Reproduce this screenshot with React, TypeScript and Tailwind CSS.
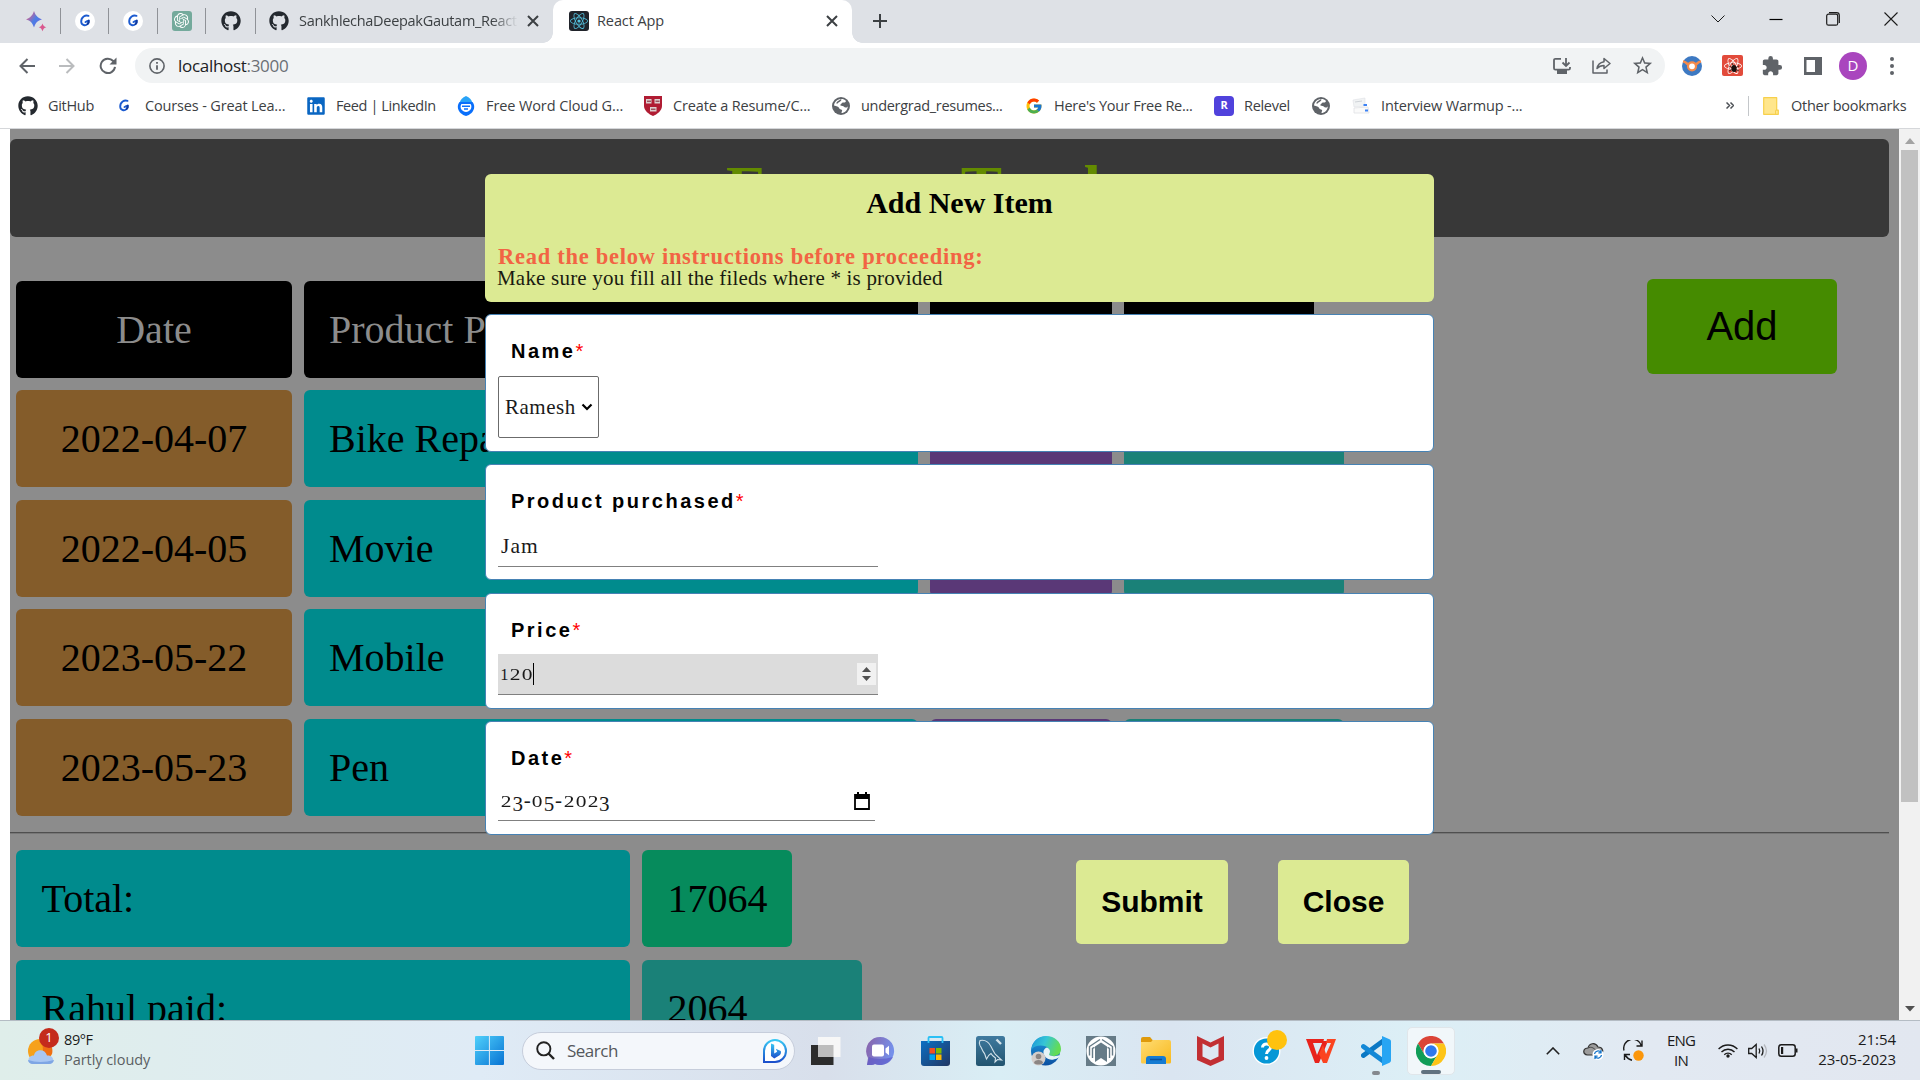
import React from "react";
import { FaGithub, FaLinkedin, FaReact } from "react-icons/fa";
import { FcGoogle } from "react-icons/fc";
import { SiOpenai } from "react-icons/si";
import { MdExtension, MdStarBorder } from "react-icons/md";

/* ---------- small brand and system icons ---------- */

const GreatLearning = ({ plain }: { plain?: boolean }) => (
  <svg viewBox="0 0 20 20" className="size-5">
    {!plain && <circle cx="10" cy="10" r="10" fill="#fff" />}
    <path d="M13.500 4.800C10.500 3.600 6 5.800 6.200 10.800c.2 3.600 4.200 4.200 6.300 2.300 1.200-1.100 1.300-2.600 1.200-3.300-1.300.300-2.200.700-3.200 1.200" fill="none" stroke="#1c5bd0" strokeWidth="1.900" strokeLinecap="round" />
    <path d="M12.500 13.100c1.200-1.100 1.300-2.600 1.200-3.300" fill="none" stroke="#123a9c" strokeWidth="1.900" strokeLinecap="round" />
  </svg>
);

const Sparkle = () => (
  <svg viewBox="0 0 22 22" className="size-[22px]">
    <defs>
      <linearGradient id="spark" x1="0" x2="1" y1="0.200" y2="1">
        <stop offset="0" stopColor="#f4587a" />
        <stop offset="0.500" stopColor="#4a7fe6" />
        <stop offset="1" stopColor="#7b5bd8" />
      </linearGradient>
    </defs>
    <path d="M9 1c1.800 5 3.500 6.500 8 8.300-4.500 1.700-6.200 3.200-8 8.200-1.800-5-3.500-6.500-8-8.200C5.500 7.500 7.200 6 9 1z" fill="url(#spark)" />
    <path d="M17.500 13.500c.8 2.300 1.700 3.100 3.800 3.800-2.100.7-3 1.600-3.800 3.900-.8-2.300-1.700-3.200-3.800-3.900 2.100-.7 3-1.500 3.800-3.800z" fill="#d9588e" />
  </svg>
);

const CloseX = () => (
  <svg viewBox="0 0 12 12" className="size-3" stroke="#3c4043" strokeWidth="2">
    <path d="M1 1l10 10M11 1L1 11" />
  </svg>
);

const Globe = () => (
  <svg viewBox="0 0 18 18" className="size-[18px]">
    <circle cx="9" cy="9" r="9" fill="#5f6368" />
    <path d="M9.500 2c2 0 3 .5 4.500 2-.5 1.500-1.500 1.700-3 1.500-1.500 0-1.200 1.500-2.500 2-1 .5.5 1.500 2 1.500s1.500 1.500 3 1.500 2-.5 2.500-1.500C15.500 13.500 12.500 16 9.500 16c0-1.500 1-2 .5-3-1-1-2.500-.5-3-2C6.500 9.500 4.500 9 2 8.500 2.500 4.500 5.500 2 9.500 2z" fill="#fff" />
    <path d="M9 2.500C8 5 5 4 5 6.500" fill="none" stroke="#5f6368" strokeWidth="1.500" />
  </svg>
);

const WordCloud = () => (
  <svg viewBox="0 0 18 20" className="h-5 w-[18px]">
    <path d="M9 0c3.500 1.500 5.500 3.500 6.300 6.500H2.700C3.500 3.500 5.500 1.500 9 0z" fill="#29a3f7" />
    <path d="M2.500 6h13c1.500 2 2 4 1.500 6.500-.8 3.500-4 6.500-8 7.500-4-1-7.200-4-8-7.500C.5 10 1 8 2.500 6z" fill="#0a6ffb" />
    <path d="M4.500 8h9c1.500 1.500 1 5.500-1 6.500-1 .6-1.500 1.500-3.500 1.500s-2.500-1-3.500-1.500c-2-1-2.500-5-1-6.500z" fill="#fff" />
    <path d="M5 10.300h8M7 13h4" stroke="#0a6ffb" strokeWidth="1.500" />
  </svg>
);

const Shield = () => (
  <svg viewBox="0 0 18 20" className="h-5 w-[18px]">
    <path d="M0 0h18v10c0 4.500-5 8.500-9 10-4-1.500-9-5.500-9-10z" fill="#b01c33" />
    <path d="M2 3h5.500v4.500H2zM10.500 3H16v4.500h-5.500zM6 11h6.500v4.500H6z" fill="#ddcfd0" />
    <path d="M3 5.200h4M11.500 5.200h4M7 13.200h4.500" stroke="#7c1f2c" strokeWidth="1" />
  </svg>
);

const InterviewIcon = () => (
  <svg viewBox="0 0 18 18" className="size-[18px]">
    <path d="M1 3l12-2v8L2 10z" fill="#f1f3f4" stroke="#dfe1e5" strokeWidth=".6" />
    <path d="M2 11l14-1 1 6H2z" fill="#fafafa" stroke="#dfe1e5" strokeWidth=".8" />
    <path d="M3 5l7-1" stroke="#cfd3d8" />
    <path d="M11.500 8h3.500M13 13.500h3" stroke="#3c82f4" strokeWidth="1.800" />
  </svg>
);

const Folder = () => (
  <svg viewBox="0 0 16 18" className="h-[18px] w-4">
    <path d="M.7.700h13v12.500h1.600v4.100H.7z" fill="#ffe68c" stroke="#f7d04c" strokeWidth="1.200" strokeLinejoin="round" />
    <path d="M12.500 17v-3.500c0-.8 2-.8 2 0" fill="none" stroke="#f7d04c" />
  </svg>
);

/* ---------- browser chrome ---------- */

const Separator = () => <div className="h-[26px] w-px bg-[#8f9297]" />;

function TabStrip() {
  return (
    <div className="flex h-[43px] items-center bg-[#dee1e6] pb-[2px] text-[14.5px] tracking-[-0.3px] text-[#3c4043]">
      <div className="flex w-[60px] justify-center pl-3"><Sparkle /></div>
      <Separator />
      <div className="flex w-[47px] justify-center"><GreatLearning /></div>
      <Separator />
      <div className="flex w-[48px] justify-center"><GreatLearning /></div>
      <Separator />
      <div className="flex w-[47px] justify-center">
        <div className="flex size-5 items-center justify-center rounded-[3px] bg-[#74aa9c] text-white"><SiOpenai size={15} /></div>
      </div>
      <Separator />
      <div className="flex w-[49px] justify-center text-[#24292f]"><FaGithub size={20} /></div>
      <Separator />
      <div className="flex w-[297px] items-center pl-[13px]">
        <FaGithub size={20} className="shrink-0 text-[#24292f]" />
        <div className="ml-[10px] w-[219px] overflow-hidden whitespace-nowrap [mask-image:linear-gradient(to_right,black_88%,transparent)]">SankhlechaDeepakGautam_React</div>
        <div className="ml-[9px]"><CloseX /></div>
      </div>
      <div className="relative flex h-[43px] w-[299px] items-center self-start rounded-t-[10px] bg-white pb-[2px] pl-4">
        <div className="absolute bottom-0 -left-[10px] size-[10px] bg-[radial-gradient(circle_at_0_0,#dee1e6_9.5px,white_10px)]" />
        <div className="absolute -right-[10px] bottom-0 size-[10px] bg-[radial-gradient(circle_at_100%_0,#dee1e6_9.5px,white_10px)]" />
        <div className="flex size-5 items-center justify-center rounded-[3px] bg-[#20232a] text-[#53c1de]"><FaReact size={18} /></div>
        <span className="ml-2 tracking-[-0.1px]">React App</span>
        <div className="mr-[14px] ml-auto"><CloseX /></div>
      </div>
      <svg viewBox="0 0 16 16" className="ml-5 size-4" stroke="#3c4043" strokeWidth="2"><path d="M8 1v14M1 8h14" /></svg>
      <div className="ml-auto flex h-9 items-center pb-1">
        <svg viewBox="0 0 14 8" className="h-2 w-[14px]" fill="none" stroke="#1b1b1b"><path d="M.5.500l6.500 6.500 6.500-6.500" /></svg>
        <svg viewBox="0 0 14 14" className="ml-11 size-[14px]" stroke="#000" strokeWidth="1.200"><path d="M.5 7.500h13" /></svg>
        <svg viewBox="0 0 14 14" className="ml-[43px] size-[14px]" fill="none" stroke="#1b1b1b" strokeWidth="1.200"><rect x=".7" y="2.200" width="11" height="11" rx="1.800" /><path d="M3 .7h7.500a2.800 2.800 0 0 1 2.800 2.800V11" /></svg>
        <svg viewBox="0 0 14 14" className="mr-[22px] ml-11 size-[14px]" stroke="#1b1b1b" strokeWidth="1.100"><path d="M.5.500l13 13M13.500.5l-13 13" /></svg>
      </div>
    </div>
  );
}

function Toolbar() {
  return (
    <div className="flex h-[45px] items-center pl-[19px]">
      <svg viewBox="0 0 16 16" className="size-4" fill="none" stroke="#5f6368" strokeWidth="2"><path d="M16 8H1.500M8.500 1L1.500 8l7 7" /></svg>
      <svg viewBox="0 0 16 16" className="ml-6 size-4" fill="none" stroke="#babcbe" strokeWidth="2"><path d="M0 8h14.500M7.500 1l7 7-7 7" /></svg>
      <svg viewBox="0 0 18 18" className="ml-6 size-[18px]" fill="none" stroke="#5f6368" strokeWidth="2"><path d="M16 9.800A7.200 7.200 0 1 1 14.200 4L16 6" /><path d="M17.500.500v7h-7z" fill="#5f6368" stroke="none" /></svg>
      <div className="ml-[18px] flex h-[35px] w-[1530px] items-center rounded-full bg-[#f1f3f4] pl-[14px]">
        <svg viewBox="0 0 16 16" className="size-4" fill="none" stroke="#5f6368" strokeWidth="1.600"><circle cx="8" cy="8" r="7.100" /><path d="M8 7.200v4.500M8 4v1.700" strokeWidth="1.800" /></svg>
        <span className="ml-[13px] text-[17px] tracking-[-0.3px] text-[#202124]">localhost<span className="text-[#6b6f74]">:3000</span></span>
        <svg viewBox="0 0 18 18" className="ml-auto h-[18px] w-[18px]" fill="none" stroke="#5f6368" strokeWidth="1.800"><path d="M8 1.800H2.500Q1 1.800 1 3.300v7.900q0 1.500 1.500 1.500h13q1.500 0 1.500-1.500V10M4 16h10" /><path d="M13 1v7.500M9.500 5.500L13 9l3.500-3.500" /><path d="M4 13h10v4H4z" fill="#5f6368" stroke="none" /></svg>
        <svg viewBox="0 0 19 17" className="ml-[21px] h-[17px] w-[19px]" fill="none" stroke="#5f6368" strokeWidth="1.500"><path d="M1 3.500V16h14v-3.500M12 1.500L18 6.500l-6 5V8.500c-3 0-5 .8-7 3 .5-3.500 3-6 7-6.800z" strokeLinejoin="round" /></svg>
        <MdStarBorder size={23} className="mr-[11px] ml-[20px] text-[#5f6368]" />
      </div>
      <svg viewBox="0 0 20 20" className="ml-[17px] size-5"><circle cx="10" cy="10" r="10" fill="#3d79c2" /><path d="M1 5.500c2 0 3 1 4.500 2.500h9C16 6.500 17 5.500 19 5.500" stroke="#f58a4b" strokeWidth="2.500" fill="none" /><circle cx="10" cy="10.300" r="4" fill="#fff" stroke="#f58a4b" strokeWidth="2.200" /></svg>
      <div className="relative ml-5 flex size-[21px] items-center justify-center rounded-[2px] bg-[#e24b3b] text-white">
        <FaReact size={18} />
        <svg viewBox="0 0 10 10" className="absolute right-1 bottom-[3px] size-[10px]"><ellipse cx="5" cy="5.500" rx="2.500" ry="3.500" fill="#1c1210" /><path d="M0 3l10 5M0 8l10-5M3 0l4 9" stroke="#1c1210" strokeWidth=".8" /></svg>
      </div>
      <MdExtension size={22} className="ml-[18px] text-[#5f6368]" />
      <svg viewBox="0 0 18 18" className="ml-[21px] size-[18px]"><path d="M0 0h18v18H0z" fill="#5f6368" /><path d="M2.500 3H11v12H2.500z" fill="#fff" /></svg>
      <div className="ml-[17px] flex size-7 items-center justify-center rounded-full bg-[#a946be] text-[15px] text-white">D</div>
      <svg viewBox="0 0 4 18" className="ml-[23px] h-[18px] w-1" fill="#5f6368"><circle cx="2" cy="2" r="2" /><circle cx="2" cy="9" r="2" /><circle cx="2" cy="16" r="2" /></svg>
    </div>
  );
}

function Bookmark({ icon, label, className }: { icon: React.ReactNode; label?: string; className: string }) {
  return (
    <div className={"flex shrink-0 items-center whitespace-nowrap " + className}>
      <div className="mr-[10px] flex w-5 justify-center">{icon}</div>
      {label}
    </div>
  );
}

function BookmarksBar() {
  return (
    <div className="flex h-[41px] items-center border-b border-[#d5d7da] pb-[5px] pl-[18px] text-[14.5px] tracking-[-0.3px] text-[#3c4043]">
      <Bookmark className="w-[96px]" icon={<FaGithub size={20} className="text-[#24292f]" />} label="GitHub" />
      <Bookmark className="w-[192px] tracking-[-0.15px] [&>div]:mr-[11px]" icon={<GreatLearning plain />} label="Courses - Great Lea..." />
      <Bookmark className="w-[150px] tracking-[-0.4px]" icon={<FaLinkedin size={20} className="text-[#0a66c2]" />} label="Feed | LinkedIn" />
      <Bookmark className="w-[187px] tracking-[-0.1px]" icon={<WordCloud />} label="Free Word Cloud G..." />
      <Bookmark className="w-[188px] tracking-[-0.15px]" icon={<Shield />} label="Create a Resume/C..." />
      <Bookmark className="w-[193px]" icon={<Globe />} label="undergrad_resumes..." />
      <Bookmark className="w-[190px] tracking-[-0.25px]" icon={<FcGoogle size={18} />} label="Here's Your Free Re..." />
      <Bookmark className="w-[97px]" icon={<div className="flex size-5 items-center justify-center rounded-[4px] bg-[#5042dc] text-[11px] font-bold text-white">R</div>} label="Relevel" />
      <Bookmark className="w-[40px]" icon={<Globe />} />
      <Bookmark className="w-[175px] tracking-[-0.15px]" icon={<InterviewIcon />} label="Interview Warmup -..." />
      <div className="ml-auto flex items-center">
        <svg viewBox="0 0 8 7" className="h-[7px] w-2" fill="none" stroke="#4d5156" strokeWidth="1.500"><path d="M.5.500l3 3-3 3M4.500.500l3 3-3 3" /></svg>
        <div className="mr-[14px] ml-[14px] h-5 w-px bg-[#c4c7ca]" />
        <Folder />
        <span className="mr-[13px] ml-3 w-[116px] tracking-[-0.25px] whitespace-nowrap">Other bookmarks</span>
      </div>
    </div>
  );
}

/* ---------- expense page ---------- */

const rows = [
  { date: "2022-04-07", product: "Bike Repair" },
  { date: "2022-04-05", product: "Movie" },
  { date: "2023-05-22", product: "Mobile" },
  { date: "2023-05-23", product: "Pen" },
];

function ExpensePage() {
  return (
    <div className="flex w-[1889px] flex-col bg-[#8c8c8c] pt-[10px] font-['Liberation_Serif',serif] text-[40px] leading-[46px] text-black">
      <div className="mr-[10px] h-[98px] shrink-0 rounded-[6px] bg-[#383838] pt-[13px] text-center text-[62px] leading-[70px] font-bold text-[#638b00]">Expense Tracker</div>
      <div className="mt-[42px] flex shrink-0 items-start">
        <div className="grid grid-cols-[276px_614px_182px_220px] gap-x-3 gap-y-[12.5px] pt-[1.5px] pl-[6px] [&>div]:flex [&>div]:h-[97px] [&>div]:items-center [&>div]:rounded-[6px] [&>div]:pt-px">
          <div className="justify-center bg-black text-[#8c8c8c]">Date</div>
          <div className="bg-black pl-[25px] text-[#8c8c8c]">Product Purchased</div>
          <div className="bg-black" />
          <div className="w-[190px] bg-black" />
          {rows.map((r) => (
            <React.Fragment key={r.date}>
              <div className="justify-center bg-[#845c2a]">{r.date}</div>
              <div className="bg-[#008b8d] pl-[25px]">{r.product}</div>
              <div className="bg-[#5a3877]" />
              <div className="bg-[#1a8178]" />
            </React.Fragment>
          ))}
        </div>
        <div className="ml-[303px] flex h-[95px] w-[190px] items-center justify-center rounded-[6px] bg-[#458b00] pb-[2px] font-['Liberation_Sans',sans-serif]">Add</div>
      </div>
      <div className="mt-[16.5px] mr-[10px] h-[2px] shrink-0 border-t border-[#4f4f4f] bg-[#777]" />
      <div className="mt-[16px] grid shrink-0 grid-cols-[614px_220px] gap-x-3 gap-y-[13px] pl-[6px] [&>div]:flex [&>div]:h-[97px] [&>div]:items-center [&>div]:rounded-[6px] [&>div]:pl-[25.5px]">
        <div className="bg-[#008b8d]">Total:</div>
        <div className="w-[150px] bg-[#068b5c]">17064</div>
        <div className="bg-[#008b8d]">Rahul paid:</div>
        <div className="bg-[#1a8178]">2064</div>
      </div>
    </div>
  );
}

/* Digits with old-style proportions: 0-2 sit at x-height, 3-9 hang below the line. */
function OldStyle({ text }: { text: string }) {
  return (
    <span className="flex items-baseline">
      {text.split("").map((c, i) =>
        c === "-" ? (
          <span key={i} className="w-[8px] text-center">-</span>
        ) : c < "3" ? (
          <span key={i} className={c === "1" ? "w-[8.5px] text-center text-[16.5px]" : "w-[12px] origin-center scale-x-130 text-center text-[16.5px]"}>{c}</span>
        ) : (
          <span key={i} className="w-[11.3px] translate-y-1 text-center">{c}</span>
        ),
      )}
    </span>
  );
}

function Card({ label, className, children }: { label: string; className: string; children: React.ReactNode }) {
  return (
    <div className={"rounded-[6px] border border-[#4682b4] bg-white pl-3 " + className}>
      <div className="pt-[24px] pl-[13px] font-['Liberation_Sans',sans-serif] text-[20px] leading-6 font-bold tracking-[2.5px]">
        {label}<span className="font-normal text-[#f00]">*</span>
      </div>
      {children}
    </div>
  );
}

function Modal() {
  return (
    <div className="absolute top-[45px] left-[485px] w-[949px] font-['Liberation_Serif',serif] text-[21px] leading-[23px] text-black">
      <div className="h-[128px] rounded-[6px] bg-[#dcea93] pl-3">
        <div className="pt-[11px] pr-3 text-center text-[30px] leading-[35px] font-bold">Add New Item</div>
        <div className="mt-[25px] ml-px w-fit text-[22.5px] font-bold tracking-[0.72px] whitespace-nowrap text-[#f26444]">Read the below instructions before proceeding:</div>
        <div className="-mt-px w-fit tracking-[0.2px] whitespace-nowrap text-[#1a1a10]">Make sure you fill all the fileds where * is provided</div>
      </div>
      <Card label="Name" className="mt-3 h-[138px]">
        <div className="mt-[13px] flex h-[62px] w-[101px] items-center rounded-[2px] border border-[#6b6b6b] pl-[6px]">
          <span className="w-[72px] tracking-[0.5px] text-[#1a1a1a]">Ramesh</span>
          <svg viewBox="0 0 12 8" className="ml-[4px] h-2 w-3" fill="none" stroke="#000" strokeWidth="2.200"><path d="M1.500 1.500L6 6l4.500-4.500" /></svg>
        </div>
      </Card>
      <Card label="Product purchased" className="mt-3 h-[116px]">
        <div className="mt-[13px] flex h-[41px] w-[380px] items-center border-b border-[#808080] pl-[3px] text-[21.5px] tracking-[1.1px] text-[#1a1a1a]">Jam</div>
      </Card>
      <Card label="Price" className="mt-[13px] h-[116px]">
        <div className="mt-[12px] flex h-[41px] w-[380px] items-center border-b border-[#808080] bg-[#dcdcdc] pr-[2px] pl-[2px] text-[#1a1a1a]">
          <OldStyle text="120" />
          <div className="h-[22px] w-px bg-black" />
          <div className="ml-auto flex h-[22px] w-[19px] flex-col items-center justify-center gap-1 bg-[#f1f1f1]">
            <svg viewBox="0 0 9 5" className="h-[5px] w-[9px]" fill="#505050"><path d="M0 5L4.500 0 9 5z" /></svg>
            <svg viewBox="0 0 9 5" className="h-[5px] w-[9px]" fill="#505050"><path d="M0 0l4.500 5L9 0z" /></svg>
          </div>
        </div>
      </Card>
      <Card label="Date" className="mt-3 h-[114px]">
        <div className="mt-[13px] flex h-[38px] w-[377px] items-center border-b border-[#808080] pr-[5px] pb-[2px] pl-[2px] text-[#1a1a1a]">
          <OldStyle text="23-05-2023" />
          <svg viewBox="0 0 16 18" className="ml-auto h-[18px] w-4"><path d="M1 3h14v14H1z" fill="none" stroke="#000" strokeWidth="1.800" /><path d="M1 2h14v5H1zM3 0h2v3H3zM11 0h2v3h-2z" /></svg>
        </div>
      </Card>
      <div className="mt-[25px] flex justify-end gap-[50px] pr-[25px] font-['Liberation_Sans',sans-serif] text-[30px] font-bold [&>div]:flex [&>div]:h-[84px] [&>div]:items-center [&>div]:justify-center [&>div]:rounded-[5px] [&>div]:bg-[#dcea93] [&>div]:pb-[2px]">
        <div className="w-[152px]">Submit</div>
        <div className="w-[131px]">Close</div>
      </div>
    </div>
  );
}

function Scrollbar() {
  return (
    <div className="flex w-[21px] flex-col items-center bg-[#f1f1f1]">
      <svg viewBox="0 0 10 6" className="mt-[9px] mb-[6px] h-[6px] w-[10px] shrink-0" fill="#a3a3a3"><path d="M0 6l5-6 5 6z" /></svg>
      <div className="h-[652px] w-[17px] bg-[#c1c1c1]" />
      <svg viewBox="0 0 10 6" className="mt-auto mb-2 h-[6px] w-[10px] shrink-0" fill="#505050"><path d="M0 0l5 5.500L10 0z" /></svg>
    </div>
  );
}

/* ---------- Windows taskbar ---------- */

function TaskbarApps() {
  return (
    <div className="flex items-center">
      <svg viewBox="0 0 29 29" className="size-[29px]">
        <defs><linearGradient id="win" x1="0" y1="0" x2="1" y2="1"><stop offset="0" stopColor="#4fd0fb" /><stop offset="1" stopColor="#0873d3" /></linearGradient></defs>
        <path d="M0 1q0-1 1-1h12.900v13.900H0zM14.900 0H28q1 0 1 1v12.900H14.900zM0 14.900h13.900V29H1q-1 0-1-1zM14.900 14.900H29V28q0 1-1 1H14.900z" fill="url(#win)" />
      </svg>
      <div className="ml-[18px] flex h-[38px] w-[273px] items-center rounded-full border border-[#c6cddb] bg-[#f4f7fb] pr-[6px] pl-[13px]">
        <svg viewBox="0 0 19 19" className="size-[19px]" fill="none" stroke="#222"><circle cx="7.800" cy="7.800" r="6.600" strokeWidth="1.900" /><path d="M12.500 12.500l5.500 5.500" strokeWidth="2.400" /></svg>
        <span className="ml-3 text-[17px] tracking-[-0.5px] text-[#55585c]">Search</span>
        <svg viewBox="0 0 26 26" className="ml-auto size-[26px]">
          <defs><linearGradient id="bing" x1="0" y1="0" x2="0" y2="1"><stop offset="0" stopColor="#38c8f4" /><stop offset="1" stopColor="#1b4fcb" /></linearGradient></defs>
          <path d="M2 24V13a11 11 0 1 1 11 11z" fill="#fff" stroke="url(#bing)" strokeWidth="2" />
          <path d="M9 5.500l3.200 1.200v8.800l3-1.800-1.400-3 5 2.200c.6 2-.2 3.600-1.600 4.500l-5 3L9 18z" fill="url(#bing)" />
        </svg>
      </div>
      <svg viewBox="0 0 30 28" className="ml-4 h-7 w-[30px]"><path d="M0 8h22.500v20H0z" fill="#2c2c2c" /><path d="M7 0h22.500v20H7z" fill="#f7f7f7" /><path d="M7 8h15.500v12H7z" fill="#bdbdbd" /></svg>
      <svg viewBox="0 0 29 29" className="ml-[25px] size-[29px]">
        <defs><linearGradient id="chat" x1="0" y1="0" x2="1" y2="0.300"><stop offset="0" stopColor="#8a62a8" /><stop offset="1" stopColor="#7590ea" /></linearGradient></defs>
        <path d="M1 29l1-7A14 14 0 1 1 9 28q-3 1.500-8 1z" fill="url(#chat)" /><path d="M3 21q10 4 24 0a14 14 0 0 1-18 7q-3 1.500-8 1z" fill="#5a55c8" opacity=".6" />
        <rect x="6" y="8.500" width="12" height="12" rx="2" fill="#fff" /><path d="M19.500 12.500l3.500-2.700v9.400l-3.500-2.700z" fill="#fff" />
      </svg>
      <svg viewBox="0 0 29 30" className="ml-[26px] h-[30px] w-[29px]">
        <defs><linearGradient id="store" x1="0" y1="0" x2="1" y2="1"><stop offset="0" stopColor="#0b6fc4" /><stop offset="1" stopColor="#223763" /></linearGradient></defs>
        <path d="M0 5h29v22q0 3-3 3H3q-3 0-3-3z" fill="url(#store)" /><path d="M7.500 7V2q0-1 1-1h12q1 0 1 1v5" fill="none" stroke="#2bc0f5" strokeWidth="1.800" />
        <path d="M8.500 12H14v5.500H8.500z" fill="#f25022" /><path d="M15 12h5.500v5.500H15z" fill="#7fba00" /><path d="M8.500 18.500H14V24H8.500z" fill="#00a4ef" /><path d="M15 18.500h5.500V24H15z" fill="#ffb900" />
      </svg>
      <svg viewBox="0 0 29 30" className="ml-[26px] h-[30px] w-[29px]">
        <defs><linearGradient id="sql" x1="0" y1="0" x2="0" y2="1"><stop offset="0" stopColor="#3f7a9f" /><stop offset="1" stopColor="#22546f" /></linearGradient></defs>
        <rect width="29" height="30" rx="2.500" fill="url(#sql)" />
        <path d="M4 4.500c5-1 9 2 11 6 1.500 3 3 6 4.500 8l6 5.500-4-.5-2.500 2.500.5-4c-1.500-1-3.500-2.500-4.500-4.500-2 1-3 2.500-4.500 5.500-1-2-1-3.500-2-5.500C6 15 6 12 4 9.500 3 8 3.200 6 4 4.500z" fill="none" stroke="#d3e2ea" strokeWidth="1.100" /><path d="M20.500 3.500l4.500 4.500" stroke="#d3e2ea" strokeWidth="2.400" />
      </svg>
      <svg viewBox="0 0 30 30" className="ml-[26px] size-[30px]">
        <defs>
          <linearGradient id="edgeA" x1="0" y1="0" x2="1" y2="0.300"><stop offset="0" stopColor="#1993d8" /><stop offset=".5" stopColor="#36c5d6" /><stop offset="1" stopColor="#63dc55" /></linearGradient>
          <linearGradient id="edgeB" x1="0" y1="0" x2="0" y2="1"><stop offset="0" stopColor="#1f9ee0" /><stop offset="1" stopColor="#0c4fa0" /></linearGradient>
        </defs>
        <circle cx="14.500" cy="15" r="14.500" fill="url(#edgeB)" />
        <path d="M.5 13.500C1.500 5 7.500 0 15 0c9 0 15 6 15 13 0 5-4 7-7.500 7-3 0-5-.8-4.500-2 1.500-3 .5-6-3-7.500C10 8.500 3 9.500.5 13.500z" fill="url(#edgeA)" />
        <path d="M12.500 15c-.8 6 5 9.500 10 8.500 2.500-.5 3.500-1 6-2.500v-2c-3 1.500-8 1.500-10.200 0-.7-.5.700-1.500.700-3.500 0-1.500-1-3.500-3-4-2 .5-3 2-3.500 3.500z" fill="#e6f4f7" />
        <circle cx="7.500" cy="22.500" r="7" fill="#d4cecb" /><circle cx="7.500" cy="20.500" r="2.800" fill="#8b8583" /><path d="M3 27c0-4 9-4 9 0-2 2-7 2-9 0z" fill="#8b8583" />
      </svg>
      <svg viewBox="0 0 30 30" className="ml-[25px] size-[30px]"><path d="M0 0h30v30H0z" fill="#667b87" /><circle cx="15" cy="15" r="14.500" fill="#fff" /><path d="M9 10.500l6-4 6 4V26l-6-4-6 4z" fill="#667b87" /><path d="M3.500 19.500V10.500L14 3.500M26.500 19.500V10.500L16 3.500M6.500 22V12.500l2-1.200M23.500 22V12.500l-2-1.200" fill="none" stroke="#667b87" strokeWidth="1.400" /></svg>
      <svg viewBox="0 0 30 27" className="ml-[25px] h-[27px] w-[30px]">
        <defs><linearGradient id="fold" x1="0" y1="0" x2="1" y2="1"><stop offset="0" stopColor="#ffdc73" /><stop offset="1" stopColor="#f8b91e" /></linearGradient></defs>
        <path d="M0 2q0-2 2-2h7l3 3.500V9H0z" fill="#df9a0b" /><path d="M0 5h10l2-2h16q2 0 2 2v20q0 1.500-1.500 1.500h-27Q0 26.500 0 25z" fill="url(#fold)" /><path d="M5 27v-5q0-3 3-3h14q3 0 3 3v5z" fill="#157bd2" /><path d="M9 22.500h12" stroke="#0a509c" strokeWidth="1.500" />
      </svg>
      <svg viewBox="0 0 27 30" className="ml-[26px] h-[30px] w-[27px]"><path d="M0 0l13.500 6.500L27 0v24l-13.500 6L0 24z" fill="#c22f33" /><path d="M5.500 7.500l8 4 8-4v13l-8 3.800-8-3.800z" fill="#dde8f3" /></svg>
      <div className="relative ml-[28px] h-[30px] w-[30px]">
        <svg viewBox="0 0 30 30" className="absolute top-0 left-0 size-[30px]"><circle cx="14.500" cy="15" r="14" fill="#fff" /><circle cx="14.500" cy="15" r="12.600" fill="#0697d6" /><path d="M10.500 11.500c0-5 8.500-4.500 8 .2-.3 2.600-4 2.800-4 6.300" fill="none" stroke="#fff" strokeWidth="3" /><circle cx="14.500" cy="22" r="1.900" fill="#fff" /></svg>
        <div className="absolute -top-[6px] left-[15px] size-5 rounded-full bg-[#ffc20e]" />
      </div>
      <svg viewBox="0 0 30 24" className="ml-[24px] h-6 w-[30px]"><path d="M0 0h18l-1 4H7l4 12 6-14h5L13 24H9z" fill="#e8231c" /><path d="M17 6l3 9 5-11h-5l1-4h9l-9 24h-4l-4-9z" fill="#fb4420" /></svg>
      <div className="relative ml-[25px]">
        <svg viewBox="0 0 100 100" className="size-[30px]"><path d="M75 16L8 65" stroke="#0a78c4" strokeWidth="16" strokeLinecap="round" /><path d="M8 35l67 49" stroke="#1388d6" strokeWidth="16" strokeLinecap="round" /><path d="M70 0l25 11q5 2 5 7v64q0 5-5 7L70 100z" fill="#27a5f3" /></svg>
        <div className="absolute -bottom-[9px] left-[11px] h-1 w-2 rounded-full bg-[#85898e]" />
      </div>
      <div className="relative ml-4 flex size-12 items-center justify-center rounded-[5px] border border-[#e0e6ea] bg-[#f1f7fa]">
        <svg viewBox="2 2 44 44" className="size-[30px]">
          <path d="M4.900 13A22 22 0 0 1 43.100 13H24a11 11 0 0 0-9.500 16.500z" fill="#db4437" />
          <path d="M4.900 13l9.600 16.500a11 11 0 0 0 19 0L24 46A22 22 0 0 1 4.900 13z" fill="#109d58" />
          <path d="M43.100 13A22 22 0 0 1 24 46l9.500-16.500A11 11 0 0 0 24 13z" fill="#fdc417" />
          <circle cx="24" cy="24" r="10.800" fill="#fff" /><circle cx="24" cy="24" r="8.500" fill="#2f78ee" />
        </svg>
        <div className="absolute bottom-0 left-[13px] h-1 w-5 rounded-full bg-[#60727f]" />
      </div>
    </div>
  );
}

function Tray() {
  return (
    <div className="ml-auto flex items-center pr-6 text-[15px] leading-5 tracking-[-0.3px] text-[#1b1b1b]">
      <svg viewBox="0 0 14 8" className="h-2 w-[14px]" fill="none" stroke="#222" strokeWidth="1.600"><path d="M.8 7.200L7 1l6.200 6.200" /></svg>
      <svg viewBox="0 0 21 18" className="ml-[23px] h-[18px] w-[21px]"><path d="M4.500 13C-1 12 0 6 5 6 6 1.500 12-.5 15 5c5 0 6 5 3 8z" fill="#9c9c9c" stroke="#333" strokeWidth="1.200" /><path d="M6 5.500c4-1 6 2 9 5" fill="none" stroke="#444" /><circle cx="15" cy="12.500" r="5.500" fill="#fff" /><path d="M11.500 12a3.600 3.600 0 0 1 6.500-1.500m0-2.500v2.800h-2.600M18.500 13a3.600 3.600 0 0 1-6.500 1.600m0 2.400v-2.800h2.600" fill="none" stroke="#1373c9" strokeWidth="1.300" /></svg>
      <svg viewBox="0 0 21 21" className="ml-[19px] size-[21px]" fill="none" stroke="#1b1b1b" strokeWidth="1.400"><path d="M1 10.500A9 9 0 0 1 18.500 6M19 .5V6h-5.500M9 20.300q-4-1-7-5.300M1.500 20v-5.500H7" /><circle cx="15.500" cy="15.500" r="5.200" fill="#fb960a" stroke="none" /></svg>
      <div className="ml-[21px] w-[32px] pb-[2px] text-center tracking-[-0.8px]">ENG<br />IN</div>
      <svg viewBox="0 0 20 15" className="ml-[21px] h-[15px] w-5" fill="none" stroke="#1b1b1b" strokeWidth="1.400"><path d="M.6 6a13 13 0 0 1 18.800 0M3.500 9a9 9 0 0 1 13 0M6.300 11.700a5.200 5.200 0 0 1 7.400 0" /><circle cx="10" cy="13" r="1.700" fill="#1b1b1b" stroke="none" /></svg>
      <svg viewBox="0 0 20 16" className="ml-[10px] h-4 w-5" fill="none" stroke="#1b1b1b" strokeWidth="1.300"><path d="M.7 5.500h3l4.500-4v13l-4.500-4h-3zM11 5.500q1.500 2.500 0 5M13.500 3.500q3 4.500 0 9" /><path d="M16 1.500q5 6.500 0 13" stroke="#b5b8be" /></svg>
      <svg viewBox="0 0 20 13" className="ml-[10px] h-[13px] w-5" fill="none" stroke="#1b1b1b" strokeWidth="1.500"><rect x=".8" y=".8" width="16.400" height="11.400" rx="2.500" /><path d="M18 4.500h1.500v4H18z" fill="#1b1b1b" stroke="none" /><path d="M3 3h2.200v7H3z" fill="#1b1b1b" stroke="none" /></svg>
      <div className="w-[98px] pb-[3px] text-right tracking-[-0.05px]">21:54<br />23-05-2023</div>
    </div>
  );
}

function Taskbar() {
  return (
    <div className="flex h-[60px] items-center border-t border-[#b4bcc4] bg-[linear-gradient(to_right,#dfeeea,#dfebf6_25%,#d8dfeb_43%,#d9eef5_52%,#dae5f1_61%,#dceff6_74%,#e2e9f2_86%,#e2e7f0)]">
      <div className="relative ml-[27px] h-[30px] w-7">
        <svg viewBox="0 0 28 30" className="size-full"><circle cx="13" cy="15" r="12" fill="#f6a11c" /><path d="M15 3a12 12 0 0 1 10 15l-8 8z" fill="#ee6f14" /><path d="M6 28c-7-1-5-9 1-8.500C8 13 18 12 20 19.500c8-.5 8 8.500 2 8.500z" fill="#a9c7f3" /><path d="M6 28c-3 0-5-2-5-4q12 4 26 0-1 4-5 4z" fill="#7ea6e4" /></svg>
        <div className="absolute -top-[8px] left-[12px] flex size-5 items-center justify-center rounded-full bg-[#c42b1c] text-[13px] text-white">1</div>
      </div>
      <div className="ml-[9px] w-[411px] pb-[2px] text-[14.5px] leading-5 tracking-[-0.05px] text-[#1b1b1b]"><span className="tracking-[-0.4px]">89°F</span><div className="text-[#5b5f63]">Partly cloudy</div></div>
      <TaskbarApps />
      <Tray />
    </div>
  );
}

export default function App() {
  return (
    <div className="flex h-[1080px] w-[1920px] flex-col overflow-hidden bg-white font-['Open_Sans',sans-serif]">
      <TabStrip />
      <Toolbar />
      <BookmarksBar />
      <div className="relative flex h-[891px] overflow-hidden pl-[10px]">
        <ExpensePage />
        <Scrollbar />
        <Modal />
      </div>
      <Taskbar />
    </div>
  );
}
